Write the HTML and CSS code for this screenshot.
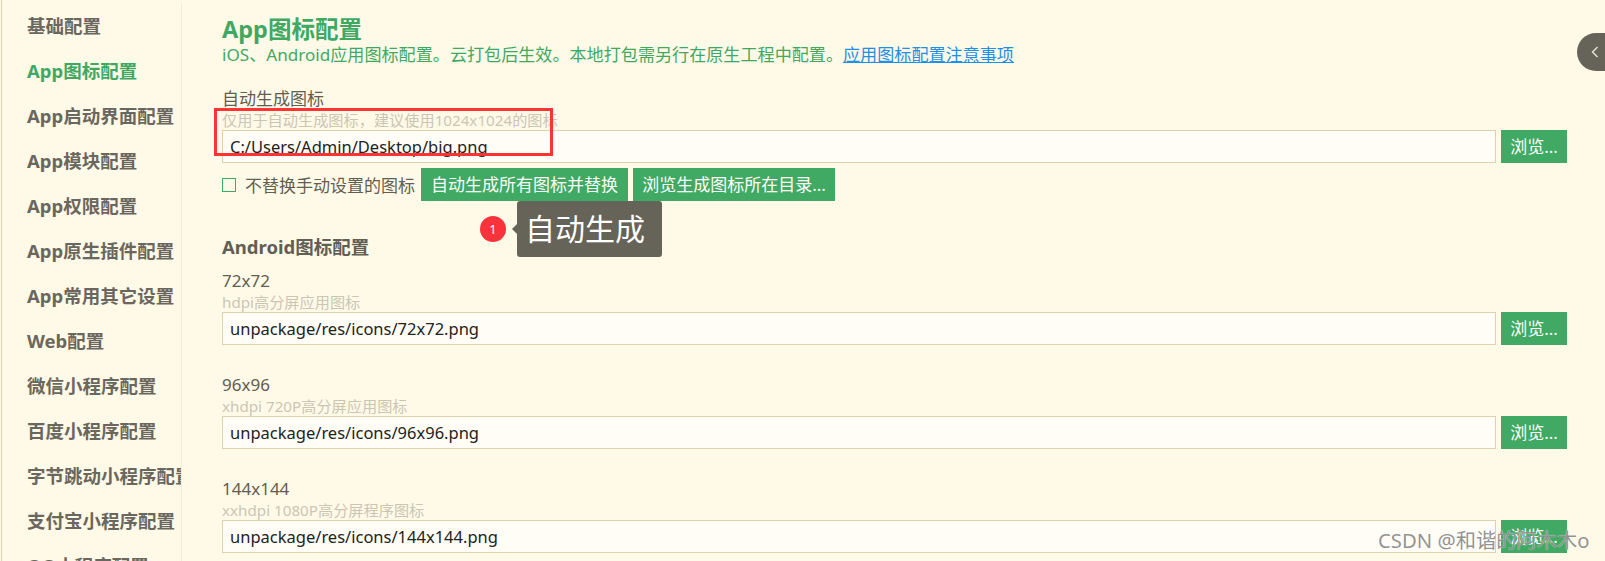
FILE: index.html
```html
<!DOCTYPE html>
<html lang="zh-CN">
<head>
    <meta charset="UTF-8">
    <title>App图标配置</title>
    <link rel="stylesheet" href="styles.css">
</head>
<body>
    <div class="page">
        <ul class="side-nav">
            <li>基础配置</li>
            <li class="active">App图标配置</li>
            <li>App启动界面配置</li>
            <li>App模块配置</li>
            <li>App权限配置</li>
            <li>App原生插件配置</li>
            <li>App常用其它设置</li>
            <li>Web配置</li>
            <li>微信小程序配置</li>
            <li>百度小程序配置</li>
            <li>字节跳动小程序配置</li>
            <li>支付宝小程序配置</li>
            <li>QQ小程序配置</li>
        </ul>

        <div class="content">
            <h1>App图标配置</h1>
            <p class="intro">iOS、Android应用图标配置。云打包后生效。本地打包需另行在原生工程中配置。<a href="#">应用图标配置注意事项</a></p>

            <div class="field field-auto">
                <div class="field-label">自动生成图标</div>
                <div class="field-hint">仅用于自动生成图标，建议使用1024x1024的图标</div>
                <div class="input-row">
                    <div class="input">C:/Users/Admin/Desktop/big.png</div>
                    <div class="btn btn-browse">浏览...</div>
                </div>
            </div>
            <div class="auto-row">
                <span class="checkbox"></span>
                <span class="check-label">不替换手动设置的图标</span>
                <div class="btn btn-auto">自动生成所有图标并替换</div>
                <div class="btn btn-dir">浏览生成图标所在目录...</div>
            </div>

            <h2>Android图标配置</h2>

            <div class="field">
                <div class="field-label">72x72</div>
                <div class="field-hint">hdpi高分屏应用图标</div>
                <div class="input-row">
                    <div class="input">unpackage/res/icons/72x72.png</div>
                    <div class="btn btn-browse">浏览...</div>
                </div>
            </div>
            <div class="field">
                <div class="field-label">96x96</div>
                <div class="field-hint">xhdpi 720P高分屏应用图标</div>
                <div class="input-row">
                    <div class="input">unpackage/res/icons/96x96.png</div>
                    <div class="btn btn-browse">浏览...</div>
                </div>
            </div>
            <div class="field">
                <div class="field-label">144x144</div>
                <div class="field-hint">xxhdpi 1080P高分屏程序图标</div>
                <div class="input-row">
                    <div class="input">unpackage/res/icons/144x144.png</div>
                    <div class="btn btn-browse">浏览...</div>
                </div>
            </div>
        </div>

        <div class="red-box"></div>
        <div class="step-dot">1</div>
        <div class="step-tip">自动生成</div>
        <div class="toggle">
            <svg width="8" height="12" viewBox="0 0 8 12"><path d="M6.5 1 1.5 6l5 5" fill="none" stroke="#e9e6dc" stroke-width="1.4"/></svg>
        </div>
        <div class="watermark">CSDN @和谐的阿木木o</div>
    </div>
</body>
</html>
```

FILE: styles.css
```css
* { box-sizing: border-box; }
html, body { margin: 0; height: 100%; overflow: hidden; }
body { background-color: #fff9e8; color: #625e52; font-family: "Noto Sans", "Noto Sans CJK SC", sans-serif; }

.page { position: relative; display: flex; height: 561px; overflow: hidden; margin-left: 1px; border-left: 1px solid #dcd3ad; }

.side-nav { flex: none; width: 180px; height: 558px; margin: 3px 0 0; padding: 0 0 0 25px; list-style: none; border-right: 1px solid #f3ecd8; overflow: hidden; }
.side-nav li { height: 45px; line-height: 45px; font-size: 18.5px; font-weight: bold; color: #6a675e; white-space: nowrap; }
.side-nav li.active { color: #3fa963; }

.content { flex: 1; padding: 14px 38px 0 40px; }
.content h1 { margin: 0; font-size: 23.5px; line-height: 30px; font-weight: bold; color: #3fa963; }
.intro { margin: -1px 0 0; font-size: 17.1px; line-height: 24px; color: #3fa963; }
.intro a { color: #1e90e6; }

.field { margin-bottom: 29px; }
.field-auto { margin: 21px 0 0; }
.field-label { font-size: 17px; line-height: 22px; }
.field-hint { font-size: 15.2px; line-height: 20px; color: #cbc6b4; }
.input-row { display: flex; gap: 5px; }
.input { flex: 1; height: 33px; line-height: 31px; padding: 0 7px; background-color: #fffdf6; border: 1px solid #dcd3ad; font-size: 16.5px; color: #222; }

.btn { flex: none; height: 33px; line-height: 33px; text-align: center; background-color: #40a963; color: #fdfdf8; font-size: 17px; white-space: nowrap; }
.btn-browse { width: 66px; }
.btn-auto { width: 207px; }
.btn-dir { width: 202px; margin-left: 5px; }

.auto-row { display: flex; align-items: center; margin-top: 5px; height: 33px; }
.checkbox { flex: none; width: 14px; height: 14px; border: 1px solid #40a963; margin-right: 9px; }
.check-label { font-size: 17px; margin-right: 6px; }

.content h2 { margin: 32px 0 9px; font-size: 18.5px; line-height: 28px; font-weight: bold; }

/* stuff drawn on top of the screenshot */
.red-box { position: absolute; left: 212px; top: 108px; width: 339px; height: 48px; border: 3px solid #f33; }
.step-dot { position: absolute; left: 478px; top: 216px; width: 26px; height: 26px; line-height: 26px; border-radius: 50%; background-color: #f9333c; color: #fff; font-size: 13px; text-align: center; }
.step-tip { position: absolute; left: 515px; top: 201px; width: 145px; height: 56px; line-height: 56px; padding-left: 8px; background-color: #666359; color: #fff; font-size: 30px; border-radius: 3px; }
.step-tip::before { content: ""; position: absolute; left: -5px; top: 23px; border: 5px solid transparent; border-left: 0; border-right-color: #666359; }
.toggle { position: absolute; right: 0; top: 33px; width: 28px; height: 38px; padding-left: 14px; display: flex; align-items: center; background-color: #666359; border-radius: 19px 0 0 19px; }
.watermark { position: absolute; left: 1376px; top: 526px; font-size: 20.3px; line-height: 28px; color: rgba(110,110,110,.75); text-shadow: 0 0 1px #fff; white-space: nowrap; }
```
